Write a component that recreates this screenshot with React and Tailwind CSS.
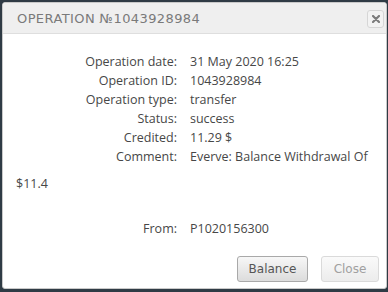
import React from 'react'

const rows = [
  ['Operation date:', '31 May 2020 16:25'],
  ['Operation ID:', '1043928984'],
  ['Operation type:', 'transfer'],
  ['Status:', 'success'],
  ['Credited:', '11.29 $'],
]

function Row({ label, children, className = 'leading-[19px]' }) {
  return (
    <div className={className}>
      <span className="inline-block w-[162px] text-right pr-[1px]">{label}</span>
      <span className="ml-[12px]">{children}</span>
    </div>
  )
}

export default function App() {
  return (
    <div className="w-[388px] h-[292px] bg-[#2f3b45] p-[2px] pb-[3px] pr-[1px]">
      <div className="h-full bg-white rounded-[3px] border border-[#c9c9c9] flex flex-col overflow-hidden">
        {/* Header */}
        <div className="h-[31px] bg-[#efefef] border-b border-[#dedede] flex items-center justify-between pl-[14px] pr-[2px] pt-[1px]">
          <span className="font-['DejaVu_Sans',sans-serif] text-[13px] tracking-[0.4px] text-[#7a7a7a]">
            OPERATION №1043928984
          </span>
          <button className="w-[17px] h-[18px] rounded-[3px] border border-[#d6d6d6] bg-[#f3f3f3] flex items-center justify-center">
            <svg width="8" height="8" viewBox="0 0 8 8">
              <path d="M1 1 L7 7 M7 1 L1 7" stroke="#7d7d7d" strokeWidth="2.2" strokeLinecap="round" />
            </svg>
          </button>
        </div>

        {/* Body */}
        <div className="flex-1 pl-[13px] pr-[10px] pt-[18px] font-['Open_Sans',sans-serif] text-[12.5px] text-[#474747]">
          {rows.map(([l, v]) => (
            <Row key={l} label={l}>{v}</Row>
          ))}
          <Row label="Comment:" className="leading-[27px] -mt-[4px]">Everve: Balance Withdrawal Of $11.4</Row>
          <div className="h-[22px]" />
          <Row label="From:">P1020156300</Row>
        </div>

        {/* Footer */}
        <div className="flex justify-end gap-[13px] pr-[7px] pb-[6px] font-['DejaVu_Sans',sans-serif] text-[12px]">
          <button className="w-[71px] h-[26px] rounded-[3px] border border-[#a9a9a9] bg-gradient-to-b from-[#f7f7f7] to-[#dcdcdc] text-[#555]">
            Balance
          </button>
          <button className="w-[58px] h-[26px] rounded-[3px] border border-[#dadada] bg-gradient-to-b from-[#fafafa] to-[#ececec] text-[#a0a0a0]">
            Close
          </button>
        </div>
      </div>
    </div>
  )
}
